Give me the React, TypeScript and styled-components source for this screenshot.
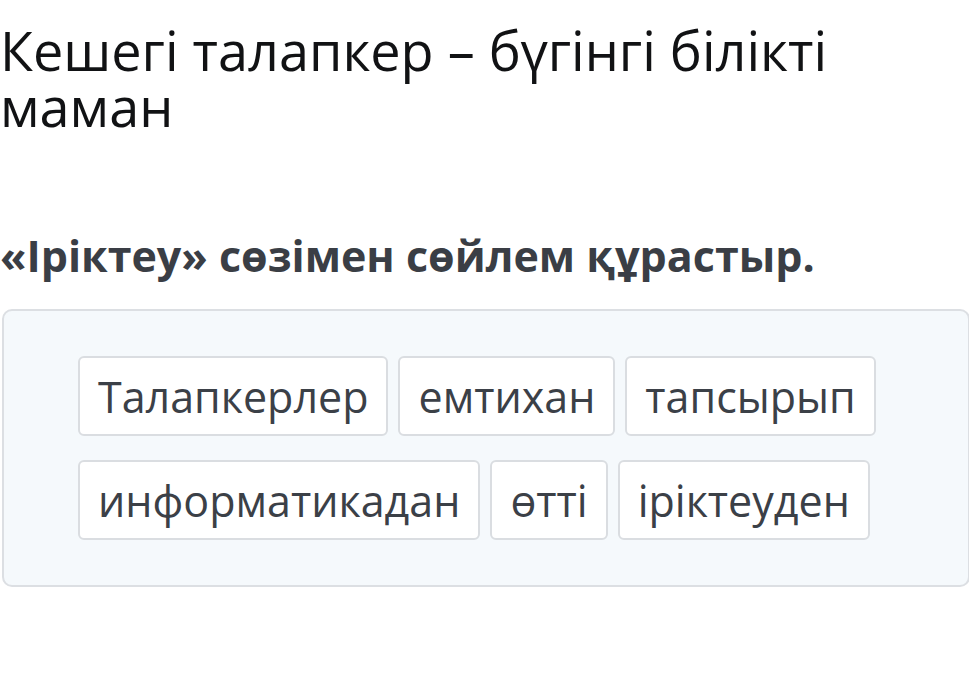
import React from 'react';
import styled, { createGlobalStyle } from 'styled-components';

const GlobalStyle = createGlobalStyle`
  html, body {
    margin: 0;
    padding: 0;
    background: #ffffff;
  }
  body {
    font-family: 'Open Sans', 'Noto Sans', sans-serif;
  }
`;

const Page = styled.div`
  width: 969px;
  height: 682px;
  overflow: hidden;
  padding-top: 22px;
  box-sizing: border-box;
`;

const Title = styled.h1`
  margin: 0;
  font-size: 54px;
  line-height: 56px;
  font-weight: 400;
  color: #111214;
`;

const Task = styled.h2`
  margin: 94px 0 0;
  font-size: 43px;
  line-height: 56px;
  font-weight: 700;
  color: #3a3e45;
`;

const Board = styled.div`
  margin: 25px 0 0 2px;
  width: 968px;
  box-sizing: border-box;
  background: #f5f9fc;
  border: 2px solid #dcdfe3;
  border-radius: 10px;
  padding: 45px 40px 45px 74px;
  display: flex;
  flex-direction: column;
  gap: 24px;
`;

const Row = styled.div`
  display: flex;
  gap: 10px;
`;

const Chip = styled.div`
  height: 80px;
  box-sizing: border-box;
  display: flex;
  align-items: center;
  padding: 0 18px;
  background: #ffffff;
  border: 2px solid #dadde1;
  border-radius: 6px;
  font-size: 43px;
  color: #3b4047;
`;

const rows = [
  ['Талапкерлер', 'емтихан', 'тапсырып'],
  ['информатикадан', 'өтті', 'іріктеуден'],
];

export default function App() {
  return (
    <Page>
      <GlobalStyle />
      <Title>Кешегі талапкер – бүгінгі білікті маман</Title>
      <Task>«Іріктеу» сөзімен сөйлем құрастыр.</Task>
      <Board>
        {rows.map((row, i) => (
          <Row key={i}>
            {row.map((w) => (
              <Chip key={w}>{w}</Chip>
            ))}
          </Row>
        ))}
      </Board>
    </Page>
  );
}
